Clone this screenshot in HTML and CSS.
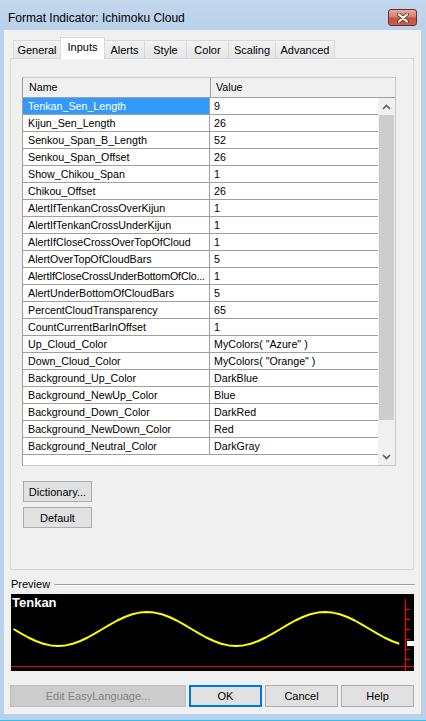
FILE: index.html
```html
<!DOCTYPE html>
<html>
<head>
<meta charset="utf-8">
<title>Format Indicator: Ichimoku Cloud</title>
<link rel="stylesheet" href="styles.css">
</head>
<body>
<div class="window">
  <div class="titlebar">
    <span class="title">Format Indicator: Ichimoku Cloud</span>
    <div class="close">
      <svg width="14" height="10" viewBox="0 0 14 10">
        <path d="M3 1.5 L11 8.5 M11 1.5 L3 8.5" stroke="#6b3a36" stroke-width="4" stroke-linecap="round" fill="none"/>
        <path d="M3 1.5 L11 8.5 M11 1.5 L3 8.5" stroke="#ffffff" stroke-width="2.2" stroke-linecap="round" fill="none"/>
      </svg>
    </div>
  </div>
  <div class="client">
    <div class="tabs">
      <div class="tab t-general">General</div>
      <div class="tab t-inputs active">Inputs</div>
      <div class="tab t-alerts">Alerts</div>
      <div class="tab t-style">Style</div>
      <div class="tab t-color">Color</div>
      <div class="tab t-scaling">Scaling</div>
      <div class="tab t-advanced">Advanced</div>
    </div>
    <div class="panel">
      <div class="grid">
        <div class="grid-head">
          <div class="h-name">Name</div>
          <div class="h-value">Value</div>
        </div>
        <div class="grid-body">
          <div class="rows">
            <div class="row selected"><div class="c-name">Tenkan_Sen_Length</div><div class="c-value">9</div></div>
            <div class="row"><div class="c-name">Kijun_Sen_Length</div><div class="c-value">26</div></div>
            <div class="row"><div class="c-name">Senkou_Span_B_Length</div><div class="c-value">52</div></div>
            <div class="row"><div class="c-name">Senkou_Span_Offset</div><div class="c-value">26</div></div>
            <div class="row"><div class="c-name">Show_Chikou_Span</div><div class="c-value">1</div></div>
            <div class="row"><div class="c-name">Chikou_Offset</div><div class="c-value">26</div></div>
            <div class="row"><div class="c-name">AlertIfTenkanCrossOverKijun</div><div class="c-value">1</div></div>
            <div class="row"><div class="c-name">AlertIfTenkanCrossUnderKijun</div><div class="c-value">1</div></div>
            <div class="row"><div class="c-name">AlertIfCloseCrossOverTopOfCloud</div><div class="c-value">1</div></div>
            <div class="row"><div class="c-name">AlertOverTopOfCloudBars</div><div class="c-value">5</div></div>
            <div class="row"><div class="c-name long">AlertIfCloseCrossUnderBottomOfClo...</div><div class="c-value">1</div></div>
            <div class="row"><div class="c-name">AlertUnderBottomOfCloudBars</div><div class="c-value">5</div></div>
            <div class="row"><div class="c-name">PercentCloudTransparency</div><div class="c-value">65</div></div>
            <div class="row"><div class="c-name">CountCurrentBarInOffset</div><div class="c-value">1</div></div>
            <div class="row"><div class="c-name">Up_Cloud_Color</div><div class="c-value">MyColors( "Azure" )</div></div>
            <div class="row"><div class="c-name">Down_Cloud_Color</div><div class="c-value">MyColors( "Orange" )</div></div>
            <div class="row"><div class="c-name">Background_Up_Color</div><div class="c-value">DarkBlue</div></div>
            <div class="row"><div class="c-name">Background_NewUp_Color</div><div class="c-value">Blue</div></div>
            <div class="row"><div class="c-name">Background_Down_Color</div><div class="c-value">DarkRed</div></div>
            <div class="row"><div class="c-name">Background_NewDown_Color</div><div class="c-value">Red</div></div>
            <div class="row"><div class="c-name">Background_Neutral_Color</div><div class="c-value">DarkGray</div></div>
          </div>
          <div class="vscroll">
            <div class="arrow">
              <svg width="9" height="6" viewBox="0 0 9 6"><polyline points="1,5 4.5,1.5 8,5" fill="none" stroke="#606060" stroke-width="1.7"/></svg>
            </div>
            <div class="track"><div class="thumb"></div></div>
            <div class="arrow">
              <svg width="9" height="6" viewBox="0 0 9 6"><polyline points="1,1 4.5,4.5 8,1" fill="none" stroke="#606060" stroke-width="1.7"/></svg>
            </div>
          </div>
        </div>
      </div>
      <div class="side-buttons">
        <button class="btn side">Dictionary...</button>
        <button class="btn side">Default</button>
      </div>
    </div>
    <div class="preview-head">
      <span class="preview-label">Preview</span>
      <div class="rule"></div>
    </div>
    <div class="preview">
      <svg width="403" height="77" viewBox="11 594 403 77">
        <text x="12" y="607" class="chart-title">Tenkan</text>
        <polyline fill="none" stroke="#ffff00" stroke-width="2" stroke-linejoin="round" points="13.5,629 20.9,633.4 28.3,637.5 35.8,641 43.2,643.7 50.6,645.4 58,646 65.4,645.4 72.8,643.7 80.3,641 87.7,637.5 95.1,633.4 102.5,629 109.9,624.6 117.3,620.5 124.8,617 132.2,614.3 139.6,612.6 147,612 154.4,612.6 161.8,614.3 169.3,617 176.7,620.5 184.1,624.6 191.5,629 198.9,633.4 206.3,637.5 213.8,641 221.2,643.7 228.6,645.4 236,646 243.4,645.4 250.8,643.7 258.3,641 265.7,637.5 273.1,633.4 280.5,629 287.9,624.6 295.3,620.5 302.8,617 310.2,614.3 317.6,612.6 325,612 332.4,612.6 339.8,614.3 347.3,617 354.7,620.5 362.1,624.6 369.5,629 376.9,633.4 384.3,637.5 391.8,641 399.2,643.7"/>
        <line x1="11" y1="666.5" x2="414" y2="666.5" stroke="#ff0000" stroke-width="1.2"/>
        <line x1="405.5" y1="599" x2="405.5" y2="671" stroke="#ff0000" stroke-width="1.2"/>
        <path d="M405 609.5 H410 M405 619.5 H410 M405 629.5 H410 M405 639.5 H410 M405 649.5 H410 M405 659.5 H410" stroke="#ff0000" stroke-width="1"/>
        <rect x="407" y="641" width="7" height="5" fill="#ffffff"/>
      </svg>
    </div>
    <div class="actions">
      <button class="btn disabled wide">Edit EasyLanguage...</button>
      <button class="btn primary">OK</button>
      <button class="btn">Cancel</button>
      <button class="btn">Help</button>
    </div>
  </div>
</div>
</body>
</html>
```

FILE: styles.css
```css
* {
  box-sizing: border-box;
}

html,
body {
  margin: 0;
  padding: 0;
}

body {
  width: 426px;
  height: 721px;
  overflow: hidden;
  background: #b9d1ea;
  font-family: "Liberation Sans", Arial, sans-serif;
  font-size: 11px;
  color: #000;
}

.window {
  width: 426px;
  height: 721px;
  display: flex;
  flex-direction: column;
  background: linear-gradient(#c3d7ee, #b9d1ea 30px, #b9d1ea);
  border-bottom: 1px solid #27c4ef;
}

/* ---------- title bar ---------- */
.titlebar {
  flex: none;
  height: 30px;
  display: flex;
  align-items: flex-start;
  justify-content: space-between;
  padding: 11px 9px 0 8px;
}

.title {
  font-size: 12px;
  line-height: 14px;
  color: #000;
}

.close {
  width: 29px;
  height: 17px;
  margin-top: -2px;
  border: 1px solid #6a2f2b;
  border-radius: 3px;
  background: linear-gradient(#e9aa9c, #d9806f 45%, #c4513f 55%, #c8604c);
  display: flex;
  align-items: center;
  justify-content: center;
}

.close svg {
  display: block;
}

/* ---------- client ---------- */
.client {
  flex: 1;
  margin: 0 5px 6px 4px;
  background: #f0f0f0;
  display: flex;
  flex-direction: column;
}

/* ---------- tabs ---------- */
.tabs {
  display: flex;
  align-items: flex-end;
  height: 21px;
  margin: 7px 0 0 9px;
  position: relative;
  z-index: 2;
}

.tab {
  height: 18px;
  margin-right: -1px;
  border: 1px solid #d9d9d9;
  border-bottom: none;
  background: linear-gradient(#f2f2f2, #e6e6e6);
  display: flex;
  align-items: center;
  justify-content: center;
  padding-top: 1px;
  white-space: nowrap;
}

.tab.active {
  height: 22px;
  margin-bottom: -1px;
  background: #ffffff;
  padding-top: 0;
  padding-bottom: 3px;
  position: relative;
  z-index: 3;
}

.t-general { width: 48px; }
.t-inputs { width: 45px; }
.t-alerts { width: 41px; }
.t-style { width: 43px; }
.t-color { width: 43px; }
.t-scaling { width: 48px; }
.t-advanced { width: 60px; }

/* ---------- panel ---------- */
.panel {
  flex: none;
  width: 404px;
  height: 512px;
  margin-left: 6px;
  border: 1px solid #d9d9d9;
  background: #f0f0f0;
  padding: 18px 0 0 11px;
  display: flex;
  flex-direction: column;
}

/* ---------- property grid ---------- */
.grid {
  width: 374px;
  height: 389px;
  border: 1px solid #c8c8c8;
  border-left-color: #a0a0a0;
  display: flex;
  flex-direction: column;
  font-size: 10.7px;
}

.grid-head {
  flex: none;
  height: 20px;
  display: flex;
  background: #f0f0f0;
  border-bottom: 1px solid #a0a0a0;
}

.h-name {
  width: 188px;
  padding-left: 6px;
  border-right: 1px solid #a0a0a0;
  line-height: 19px;
}

.h-value {
  flex: 1;
  padding-left: 5px;
  line-height: 19px;
}

.grid-body {
  flex: 1;
  display: flex;
  min-height: 0;
}

.rows {
  width: 355px;
  background: #ffffff;
  overflow: hidden;
}

.row {
  height: 17px;
  display: flex;
  border-bottom: 1px solid #a0a0a0;
}

.c-name {
  width: 187px;
  padding-left: 5px;
  border-right: 1px solid #a0a0a0;
  line-height: 16px;
  white-space: nowrap;
  overflow: hidden;
}

.c-name.long {
  letter-spacing: -0.15px;
}

.c-value {
  flex: 1;
  padding-left: 4px;
  line-height: 16px;
  white-space: nowrap;
}

.row.selected .c-name {
  background: #3399ff;
  color: #ffffff;
}

.vscroll {
  width: 17px;
  background: #f0f0f0;
  display: flex;
  flex-direction: column;
}

.arrow {
  flex: none;
  height: 17px;
  display: flex;
  align-items: center;
  justify-content: center;
}

.arrow svg {
  display: block;
}

.track {
  flex: 1;
  padding: 0 1px;
}

.thumb {
  height: 305px;
  background: #cdcdcd;
}

/* ---------- buttons ---------- */
.btn {
  font-family: "Liberation Sans", Arial, sans-serif;
  font-size: 11px;
  color: #000;
  background: #e1e1e1;
  border: 1px solid #adadad;
  padding: 0;
  margin: 0;
  height: 22px;
  width: 73px;
}

.side-buttons {
  display: flex;
  flex-direction: column;
  gap: 5px;
  margin: 15px 0 0 1px;
}

.btn.side {
  width: 69px;
  height: 21px;
}

/* ---------- preview ---------- */
.preview-head {
  display: flex;
  align-items: center;
  height: 14px;
  margin: 7px 6px 0 7px;
}

.preview-label {
  line-height: 14px;
}

.rule {
  flex: 1;
  height: 1px;
  margin-left: 4px;
  margin-top: 2px;
  background: #a0a0a0;
  border-bottom: 1px solid #ffffff;
  box-sizing: content-box;
}

.preview {
  width: 403px;
  height: 77px;
  margin: 3px 0 0 7px;
  background: #000000;
}

.preview svg {
  display: block;
}

.chart-title {
  font-family: "Liberation Sans", Arial, sans-serif;
  font-weight: bold;
  font-size: 13px;
  fill: #ffffff;
}

/* ---------- action row ---------- */
.actions {
  display: flex;
  gap: 3px;
  margin: 14px 0 0 6px;
}

.btn.wide {
  width: 176px;
}

.btn.disabled {
  background: #cccccc;
  border-color: #bfbfbf;
  color: #838383;
}

.btn.primary {
  border: 2px solid #0078d7;
}
```
